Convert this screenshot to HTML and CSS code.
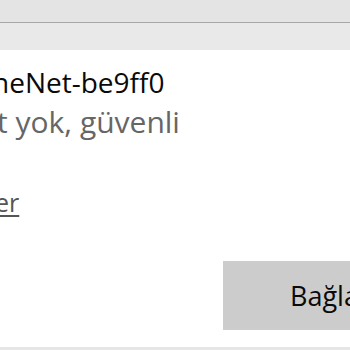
FILE: index.html
```html
<!DOCTYPE html>
<html lang="tr">
<head>
<meta charset="utf-8">
<title>Wi-Fi</title>
<link rel="stylesheet" href="styles.css">
</head>
<body>
<div class="page">
  <div class="header">
    <div class="header-top"></div>
    <div class="header-bottom"></div>
  </div>
  <div class="content">
    <div class="name">neNet-be9ff0</div>
    <div class="status">t yok, güvenli</div>
    <a class="link" href="#">er</a>
    <div class="actions">
      <button class="connect">Bağlan</button>
    </div>
  </div>
  <div class="footer"></div>
</div>
</body>
</html>
```
FILE: styles.css
```css
html, body {
  margin: 0;
  padding: 0;
  background: #ffffff;
}
body {
  width: 350px;
  height: 350px;
  overflow: hidden;
  font-family: "Open Sans", "Noto Sans", sans-serif;
}
.page {
  display: flex;
  flex-direction: column;
  height: 350px;
}
.header {
  display: flex;
  flex-direction: column;
  height: 50px;
}
.header-top {
  height: 22px;
  background: #e4e4e4;
  border-bottom: 1px solid #a8a8a8;
}
.header-bottom {
  flex: 1;
  background: #e9e9e9;
}
.content {
  flex: 1;
  display: flex;
  flex-direction: column;
  align-items: flex-start;
  padding-top: 12px;
  white-space: nowrap;
}
.name {
  font-size: 28px;
  line-height: 40px;
  color: #0a0a0a;
  margin-left: -8px;
}
.status {
  font-size: 30px;
  line-height: 40px;
  color: #666666;
  margin-left: -3px;
}
.link {
  margin-top: 40px;
  font-size: 25px;
  line-height: 40px;
  color: #555555;
  text-decoration: underline;
  text-underline-offset: 3px;
  margin-left: -5px;
}
.actions {
  margin-top: 39px;
  align-self: stretch;
  display: flex;
  padding-left: 223px;
}
.connect {
  height: 69px;
  padding: 0 60px 0 67px;
  border: none;
  background: #cccccc;
  color: #0a0a0a;
  font-family: "Open Sans", "Noto Sans", sans-serif;
  font-size: 27px;
  display: flex;
  align-items: center;
  white-space: nowrap;
  flex-shrink: 0;
}
.footer {
  height: 3px;
  background: #e6e6e6;
}
```
